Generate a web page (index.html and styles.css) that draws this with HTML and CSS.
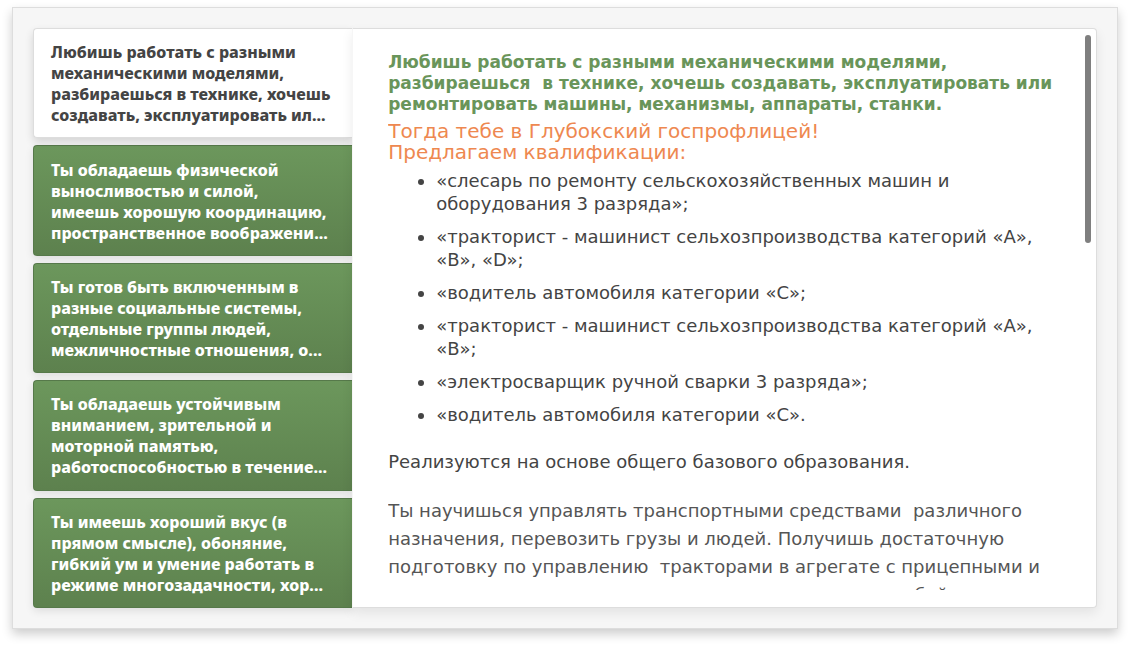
FILE: index.html
```html
<!DOCTYPE html>
<html lang="ru">
<head>
<meta charset="utf-8">
<meta name="viewport" content="width=device-width, initial-scale=1">
<title>Выбор профессии</title>
<link rel="stylesheet" href="styles.css">
</head>
<body>
<main class="widget">
  <div class="tabs" role="tablist" aria-orientation="vertical">
    <button class="tab tab-active" type="button" role="tab" id="tab-1" aria-selected="true" aria-controls="panel">Любишь работать с разными<br>механическими моделями,<br>разбираешься в технике, хочешь<br>создавать, эксплуатировать ил...</button>
    <button class="tab" type="button" role="tab" aria-selected="false">Ты обладаешь физической<br>выносливостью и силой,<br>имеешь хорошую координацию,<br>пространственное воображени...</button>
    <button class="tab" type="button" role="tab" aria-selected="false">Ты готов быть включенным в<br>разные социальные системы,<br>отдельные группы людей,<br>межличностные отношения, о...</button>
    <button class="tab" type="button" role="tab" aria-selected="false">Ты обладаешь устойчивым<br>вниманием, зрительной и<br>моторной памятью,<br>работоспособностью в течение...</button>
    <button class="tab" type="button" role="tab" aria-selected="false">Ты имеешь хороший вкус (в<br>прямом смысле), обоняние,<br>гибкий ум и умение работать в<br>режиме многозадачности, хор...</button>
  </div>
  <section class="panel" id="panel" role="tabpanel" aria-labelledby="tab-1">
    <div class="scroller">
      <h2 class="title">Любишь работать с разными механическими моделями,<br>разбираешься&nbsp; в технике, хочешь создавать, эксплуатировать или<br>ремонтировать машины, механизмы, аппараты, станки.</h2>
      <h3 class="lead">Тогда тебе в Глубокский госпрофлицей!<br>Предлагаем квалификации:</h3>
      <ul class="list">
        <li>«слесарь по ремонту сельскохозяйственных машин и<br>оборудования 3 разряда»;</li>
        <li>«тракторист - машинист сельхозпроизводства категорий «А»,<br>«В», «D»;</li>
        <li>«водитель автомобиля категории «С»;</li>
        <li>«тракторист - машинист сельхозпроизводства категорий «А»,<br>«В»;</li>
        <li>«электросварщик ручной сварки 3 разряда»;</li>
        <li>«водитель автомобиля категории «С».</li>
      </ul>
      <p class="note">Реализуются на основе общего базового образования.</p>
      <p class="text">Ты научишься управлять транспортными средствами&nbsp; различного<br>назначения, перевозить грузы и людей. Получишь достаточную<br>подготовку по управлению&nbsp; тракторами в агрегате с прицепными и<br>навесными машинами и узнаешь, как управлять на любой</p>
    </div>
    <span class="thumb"></span>
  </section>
</main>
</body>
</html>
```

FILE: styles.css
```css
* {
  box-sizing: border-box;
}

body {
  display: flex;
  height: 100vh;
  min-height: 640px;
  margin: 0;
  padding: 7px 12px 17px;
  background: #fff;
  color: #444;
  font-family: "DejaVu Sans", "Noto Sans", sans-serif;
}

.widget {
  display: grid;
  flex: 1;
  grid-template-columns: 3fr 7fr;
  padding: 20px;
  border: 1px solid #ddd;
  background: #f6f6f6;
  box-shadow: 0 5px 10px rgba(0, 0, 0, 0.2);
}

.tabs {
  display: grid;
  grid-auto-rows: 1fr;
  gap: 7px;
}

.tab {
  margin: 0;
  padding: 13px 0 11px 17px;
  border: 1px solid #56794a;
  border-right-width: 0;
  border-radius: 4px 0 0 4px;
  background: linear-gradient(#6c975c, #5d814e);
  box-shadow: 0 3px 8px rgba(0, 0, 0, 0.1);
  color: #fff;
  font: 800 16px/21px "Noto Sans", sans-serif;
  text-align: left;
  white-space: nowrap;
  cursor: pointer;
}

.tab-active {
  position: relative;
  border-color: #ddd;
  background: #fff;
  box-shadow: 0 4px 8px rgba(0, 0, 0, 0.14);
  color: #444;
}

.panel {
  position: relative;
  min-width: 0;
  min-height: 0;
  padding: 23px 24px 17px 35px;
  border: 1px solid #ddd;
  border-left-color: #f6f6f6;
  border-radius: 0 4px 4px 0;
  background: #fff;
  box-shadow: 0 5px 12px rgba(0, 0, 0, 0.08);
}

.scroller {
  height: 100%;
  overflow: hidden;
}

.title {
  margin: 0 0 6px;
  color: #69955a;
  font-size: 17px;
  font-weight: 700;
  line-height: 21px;
}

.lead {
  margin: 0 0 6px;
  color: #ee8850;
  font-size: 20px;
  font-weight: 400;
  line-height: 21px;
}

.list {
  display: grid;
  gap: 10px;
  margin: 0 0 22px;
  padding-left: 48px;
  font-size: 18px;
  line-height: 23px;
}

.note {
  margin: 0 0 21px;
  font-size: 18px;
  line-height: 28px;
}

.text {
  margin: 0;
  color: #555;
  font-size: 18px;
  line-height: 28px;
}

.title,
.lead,
.list,
.note,
.text {
  white-space: nowrap;
}

.thumb {
  position: absolute;
  top: 6px;
  right: 5px;
  width: 6px;
  height: 36%;
  border-radius: 3px;
  background: #7f7f7f;
}
```
